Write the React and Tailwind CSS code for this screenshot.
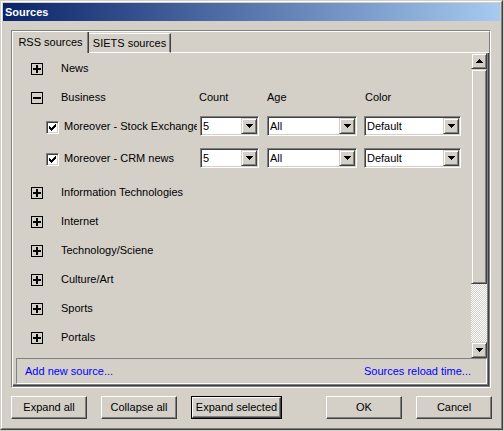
import React from "react";

function TreeBox({ minus }) {
  return (
    <svg width="12" height="12" viewBox="0 0 12 12" shapeRendering="crispEdges">
      <rect x="0.5" y="0.5" width="11" height="11" fill="#d4d0c8" stroke="#000" />
      <rect x="2" y="5" width="8" height="2" fill="#000" />
      {!minus && <rect x="5" y="2" width="2" height="8" fill="#000" />}
    </svg>
  );
}

function Arrow({ up }) {
  const d = up
    ? "M3 0h1v1H3z M2 1h3v1H2z M1 2h5v1H1z M0 3h7v1H0z"
    : "M0 0h7v1H0z M1 1h5v1H1z M2 2h3v1H2z M3 3h1v1H3z";
  return (
    <svg width="7" height="4" viewBox="0 0 7 4" shapeRendering="crispEdges">
      <path d={d} fill="#000" />
    </svg>
  );
}

function CheckMark() {
  return (
    <svg width="7" height="7" viewBox="0 0 7 7" shapeRendering="crispEdges">
      <path
        d="M6 0h1v1H6z M5 1h2v1H5z M0 2h1v1H0z M4 2h3v1H4z M0 3h2v1H0z M3 3h3v1H3z M0 4h5v1H0z M1 5h3v1H1z M2 6h1v1H2z"
        fill="#000"
      />
    </svg>
  );
}

function SmallBtn({ up, className }) {
  return (
    <div
      className={
        "flex items-center justify-center bg-[#d4d0c8] border border-t-[#d4d0c8] border-l-[#d4d0c8] border-r-[#404040] border-b-[#404040] shadow-[inset_1px_1px_#ffffff,inset_-1px_-1px_#808080] " +
        className
      }
    >
      <Arrow up={up} />
    </div>
  );
}

function Combo({ className, value }) {
  return (
    <div
      className={
        "h-[20px] flex items-center bg-white border border-t-[#808080] border-l-[#808080] border-r-white border-b-white shadow-[inset_1px_1px_#404040,inset_-1px_-1px_#d4d0c8] " +
        className
      }
    >
      <span className="flex-1 pl-[2px] whitespace-nowrap">{value}</span>
      <SmallBtn className="w-[16px] h-[16px] mr-px" />
    </div>
  );
}

function CatRow({ label }) {
  return (
    <div className="h-[29px] flex items-center">
      <div className="ml-[15px] flex">
        <TreeBox />
      </div>
      <div className="ml-[18px]">{label}</div>
    </div>
  );
}

function SourceRow({ label, tall }) {
  return (
    <div className={(tall ? "h-[34px]" : "h-[32px]") + " flex items-start pt-[4px]"}>
      <div className="ml-[30px] mt-[5px] w-[13px] h-[13px] flex items-center justify-center bg-white border border-t-[#808080] border-l-[#808080] border-r-white border-b-white shadow-[inset_1px_1px_#404040,inset_-1px_-1px_#d4d0c8]">
        <CheckMark />
      </div>
      <div className="ml-[5px] w-[133px] h-[20px] flex items-center overflow-hidden whitespace-nowrap">
        {label}
      </div>
      <Combo className="ml-[3px] w-[59px]" value="5" />
      <Combo className="ml-[8px] w-[90px]" value="All" />
      <Combo className="ml-[7px] w-[97px]" value="Default" />
    </div>
  );
}

function PushBtn({ className, children }) {
  return (
    <div
      className={
        "flex items-center justify-center pb-px bg-[#d4d0c8] border border-t-white border-l-white border-r-[#404040] border-b-[#404040] shadow-[inset_-1px_-1px_#808080] whitespace-nowrap " +
        className
      }
    >
      {children}
    </div>
  );
}

export default function App() {
  return (
    <div className="w-[504px] h-[431px] bg-[#d4d0c8] font-['Liberation_Sans',Arial,sans-serif] text-[11px] leading-none text-black overflow-hidden">
      <div className="w-[503px] h-[430px] border border-t-[#d4d0c8] border-l-[#d4d0c8] border-r-[#404040] border-b-[#404040]">
        <div className="h-full border border-t-white border-l-white border-r-[#808080] border-b-[#808080] p-px flex flex-col">
          {/* Title bar */}
          <div className="h-[18px] shrink-0 flex items-center pl-[2px] bg-[linear-gradient(to_right,#0a246a,#a6caf0)] text-white font-bold">
            Sources
          </div>

          {/* Frame */}
          <div className="mt-[9px] ml-[8px] w-[480px] h-[358px] shrink-0 border border-t-[#808080] border-l-[#808080] border-r-white border-b-white">
            <div className="h-full border border-t-white border-l-white border-r-[#808080] border-b-[#808080] flex flex-col">
              {/* Tabs */}
              <div className="flex h-[21px] shrink-0">
                <div className="w-[76px] h-[21px] flex items-center justify-center border-r border-r-[#404040] shadow-[inset_-1px_0_#808080]">
                  RSS sources
                </div>
                <div className="mt-px w-[82px] h-[20px] flex items-center justify-center border-t border-t-white border-b border-b-white border-r border-r-[#404040] shadow-[inset_-1px_0_#808080]">
                  SIETS sources
                </div>
                <div className="flex-1 border-b border-b-white" />
              </div>

              {/* Panel */}
              <div className="flex-1 flex flex-col pl-[3px] pr-px pb-px border-r border-b border-r-[#404040] border-b-[#404040] shadow-[inset_-1px_-1px_#808080]">
                <div className="h-[305px] flex shrink-0">
                  <div className="flex-1 pt-px overflow-hidden">
                    <CatRow label="News" />
                    <div className="h-[29px] flex items-center">
                      <div className="ml-[15px] flex">
                        <TreeBox minus />
                      </div>
                      <div className="ml-[18px] w-[138px]">Business</div>
                      <div className="w-[68px]">Count</div>
                      <div className="w-[98px]">Age</div>
                      <div>Color</div>
                    </div>
                    <SourceRow label="Moreover - Stock Exchange" />
                    <SourceRow label="Moreover - CRM news" tall />
                    <CatRow label="Information Technologies" />
                    <CatRow label="Internet" />
                    <CatRow label="Technology/Sciene" />
                    <CatRow label="Culture/Art" />
                    <CatRow label="Sports" />
                    <CatRow label="Portals" />
                  </div>

                  {/* Scrollbar */}
                  <div className="w-[16px] flex flex-col">
                    <SmallBtn up className="h-[16px] shrink-0" />
                    <div className="h-[215px] shrink-0 bg-[#d4d0c8] border border-t-[#d4d0c8] border-l-[#d4d0c8] border-r-[#404040] border-b-[#404040] shadow-[inset_1px_1px_#ffffff,inset_-1px_-1px_#808080]" />
                    <div className="flex-1 bg-[repeating-conic-gradient(#ffffff_0_25%,#d4d0c8_0_50%)] bg-[length:2px_2px]" />
                    <SmallBtn className="h-[16px] shrink-0" />
                  </div>
                </div>

                {/* Links */}
                <div className="h-[26px] shrink-0 flex items-center justify-between pl-[8px] pr-[15px] border border-t-[#808080] border-l-[#808080] border-r-white border-b-white text-[#0000ff]">
                  <span>Add new source...</span>
                  <span>Sources reload time...</span>
                </div>
              </div>
            </div>
          </div>

          {/* Buttons */}
          <div className="mt-[8px] ml-[8px] flex shrink-0">
            <PushBtn className="w-[76px] h-[23px]">Expand all</PushBtn>
            <PushBtn className="ml-[14px] w-[76px] h-[23px]">Collapse all</PushBtn>
            <div className="ml-[14px] border border-black">
              <PushBtn className="w-[89px] h-[21px]">Expand selected</PushBtn>
            </div>
            <PushBtn className="ml-[44px] w-[76px] h-[23px]">OK</PushBtn>
            <PushBtn className="ml-[14px] w-[76px] h-[23px]">Cancel</PushBtn>
          </div>
        </div>
      </div>
    </div>
  );
}
